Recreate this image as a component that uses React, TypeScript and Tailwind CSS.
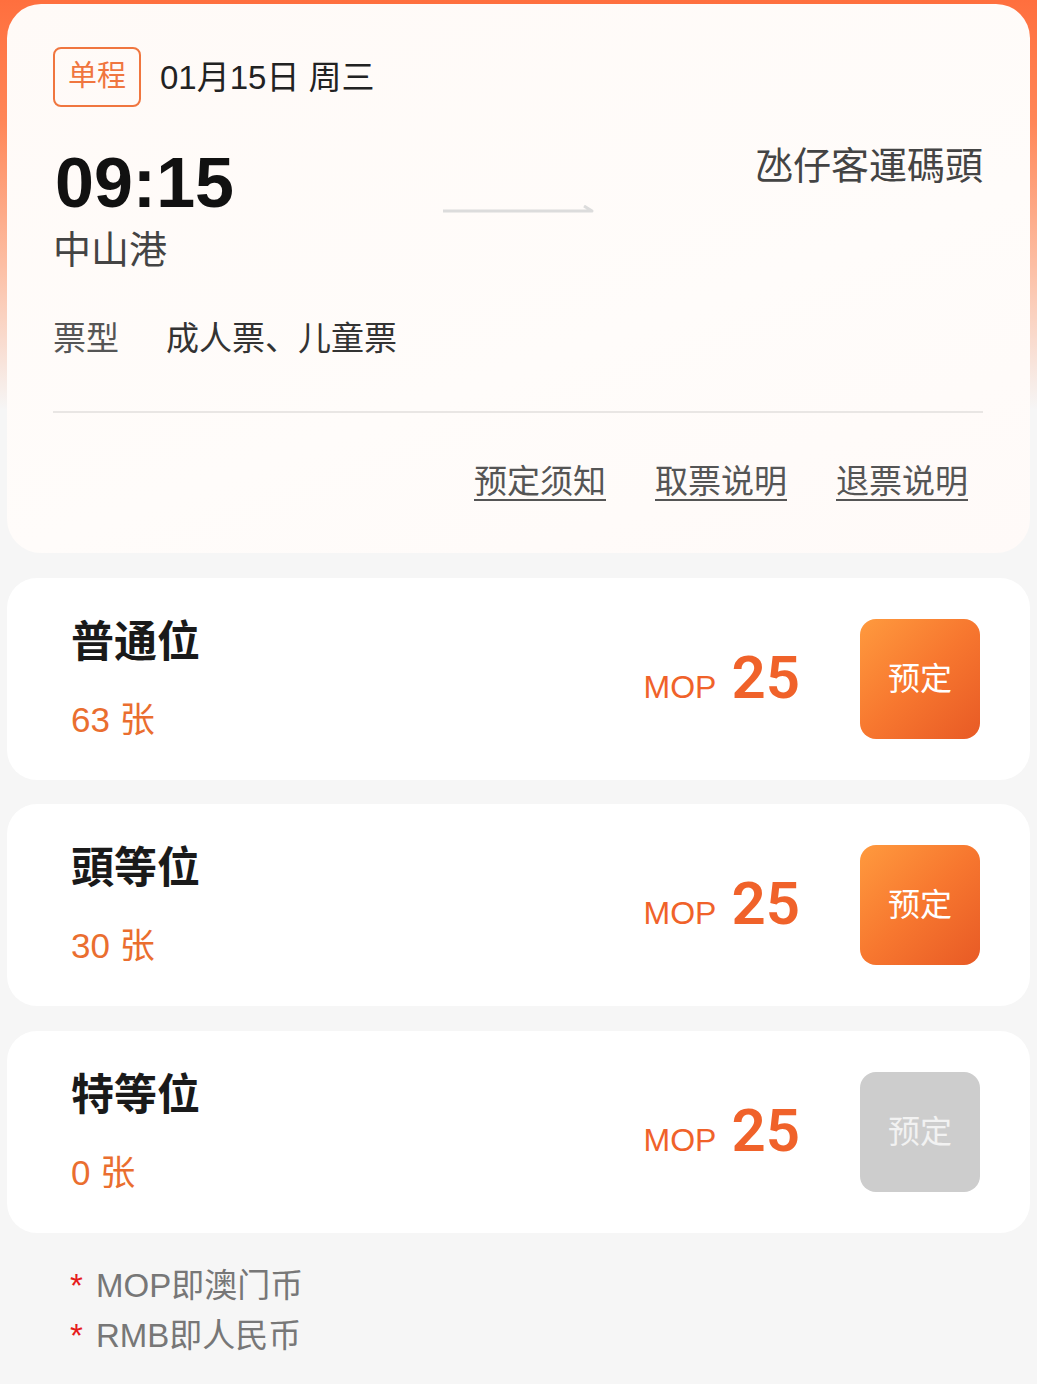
import React from "react";

const FONT = "font-['Liberation_Sans','Noto_Sans_CJK_SC',sans-serif]";

function SeatCard({ name, count, disabled, className }: { name: string; count: string; disabled?: boolean; className?: string }) {
  return (
    <div className={`h-[202px] rounded-[30px] bg-white flex items-center pl-[64px] pr-[50px] ${className ?? ""}`}>
      <div className="flex-1 flex flex-col">
        <div className="text-[43px] leading-[43px] font-bold text-[#1a1a1a]">{name}</div>
        <div className="mt-[38px] text-[35px] leading-[35px] text-[#ea6e2f]">{count}</div>
      </div>
      <div className="flex items-baseline text-[#f0622a] -mt-[2px]">
        <span className="text-[32px] leading-[32px] font-medium">MOP</span>
        <span className="ml-[15px] text-[60px] leading-[60px] font-['Roboto',sans-serif] font-semibold">25</span>
      </div>
      <div
        className={`ml-[60px] w-[120px] h-[120px] rounded-[16px] flex items-center justify-center text-[32px] ${
          disabled
            ? "bg-[#cdcdcd] text-[#f2f2f2]"
            : "bg-[linear-gradient(135deg,#ff9a3e_0%,#f7772f_50%,#e85a25_100%)] text-white"
        }`}
      >
        预定
      </div>
    </div>
  );
}

export default function App() {
  return (
    <div className={`min-h-[1384px] bg-[#f6f6f6] ${FONT}`}>
      <div className="bg-[linear-gradient(180deg,#ff6f3e_0px,#ff8657_120px,#fcc0a6_270px,#f6f6f6_410px)] pt-[4px] px-[7px]">
        <div className="rounded-[34px] bg-[linear-gradient(160deg,#fffaf7_0%,#fffcfa_60%,#fffaf8_100%)] pl-[46px] pr-[47px] pt-[43px] pb-[55px]">
          <div className="flex items-center">
            <div className="w-[88px] h-[60px] border-2 border-[#f0763f] rounded-[8px] flex items-center justify-center text-[29px] text-[#f0763f]">
              单程
            </div>
            <div className="ml-[19px] mt-[2px] text-[33px] text-[#222]">01月15日 周三</div>
          </div>

          <div className="mt-[41px] grid grid-cols-[1fr_auto_1fr]">
            <div className="flex flex-col">
              <div className="text-[70px] leading-[70px] font-bold text-[#111] ml-[2px]">09:15</div>
              <div className="mt-[13px] text-[38px] leading-[38px] text-[#444]">中山港</div>
            </div>
            <div className="mt-[57px]">
              <svg width="152" height="8" viewBox="0 0 152 8">
                <path d="M1 6 H150 L142 1" fill="none" stroke="#dcdcdc" strokeWidth="3" strokeLinejoin="round" />
              </svg>
            </div>
            <div className="flex justify-end">
              <div className="-mt-[1px] text-[38px] leading-[38px] text-[#444]">氹仔客運碼頭</div>
            </div>
          </div>

          <div className="mt-[53px] flex items-center text-[33px] leading-[33px]">
            <div className="w-[113px] text-[#555]">票型</div>
            <div className="text-[#333]">成人票、儿童票</div>
          </div>

          <div className="mt-[56px] h-[2px] bg-[#e9e6e4]" />

          <div className="mt-[52px] flex justify-end gap-[49px] mr-[15px] text-[33px] leading-[33px] text-[#555]">
            <span className="underline underline-offset-[6px] decoration-2">预定须知</span>
            <span className="underline underline-offset-[6px] decoration-2">取票说明</span>
            <span className="underline underline-offset-[6px] decoration-2">退票说明</span>
          </div>
        </div>
      </div>

      <div className="px-[7px]">
        <SeatCard name="普通位" count="63 张" className="mt-[25px]" />
        <SeatCard name="頭等位" count="30 张" className="mt-[24px]" />
        <SeatCard name="特等位" count="0 张" disabled className="mt-[25px]" />
      </div>

      <div className="mt-[28px] pl-[70px] text-[33px] leading-[50px] text-[#777]">
        <div className="flex">
          <span className="w-[26px] text-[#e61c1c]">*</span>
          <span>MOP即澳门币</span>
        </div>
        <div className="flex">
          <span className="w-[26px] text-[#e61c1c]">*</span>
          <span>RMB即人民币</span>
        </div>
      </div>
    </div>
  );
}
